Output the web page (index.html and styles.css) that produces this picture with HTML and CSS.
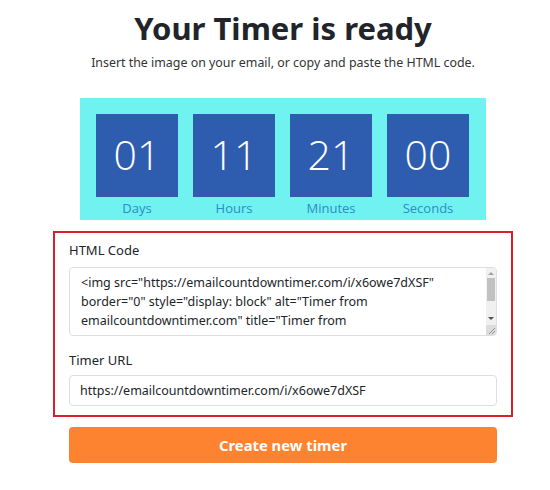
FILE: index.html
```html
<!DOCTYPE html>
<html>
<head>
<meta charset="utf-8">
<link rel="stylesheet" href="styles.css">
</head>
<body>
<main class="page">
  <h1 class="title">Your Timer is ready</h1>
  <p class="subtitle">Insert the image on your email, or copy and paste the HTML code.</p>
  <div class="timer">
    <div class="unit"><div class="digits">01</div><div class="label">Days</div></div>
    <div class="unit"><div class="digits">11</div><div class="label">Hours</div></div>
    <div class="unit"><div class="digits">21</div><div class="label">Minutes</div></div>
    <div class="unit"><div class="digits">00</div><div class="label">Seconds</div></div>
  </div>
  <section class="codebox">
    <label class="field-label">HTML Code</label>
    <div class="code-wrap">
      <textarea class="code" readonly>&lt;img src="https://emailcountdowntimer.com/i/x6owe7dXSF" border="0" style="display: block" alt="Timer from emailcountdowntimer.com" title="Timer from emailcountdowntimer.com" /&gt;
&lt;div style="font-size:10px; font-family: Arial"&gt;Timer by &lt;a href="https://emailcountdowntimer.com"&gt;emailcountdowntimer.com&lt;/a&gt;&lt;/div&gt;</textarea>
      <div class="fake-scroll" aria-hidden="true">
        <span class="arrow-up"></span>
        <span class="thumb"></span>
        <span class="arrow-down"></span>
      </div>
      <div class="fake-resizer" aria-hidden="true">
        <svg width="10" height="10" viewBox="0 0 10 10"><path d="M9 3 L3 9 M9 6 L6 9" stroke="#8a8a8a" stroke-width="0.9" fill="none"/></svg>
      </div>
    </div>
    <label class="field-label url-label">Timer URL</label>
    <input class="url" type="text" readonly value="https://emailcountdowntimer.com/i/x6owe7dXSF">
  </section>
  <button class="create">Create new timer</button>
</main>
</body>
</html>
```
FILE: styles.css
```css
html, body {
  margin: 0;
  padding: 0;
  background: #ffffff;
}
body {
  font-family: "Noto Sans", "Open Sans", sans-serif;
  color: #212529;
}
.page {
  width: 460px;
  margin-left: 53px;
  display: flex;
  flex-direction: column;
  align-items: center;
}
.title {
  margin: 6px 0 0;
  font-size: 31px;
  font-weight: 700;
  line-height: 44px;
  color: #212529;
}
.subtitle {
  margin: 3px 0 0;
  font-size: 12.4px;
  line-height: 20px;
  color: #333;
}
.timer {
  margin-top: 25px;
  width: 406px;
  height: 122px;
  box-sizing: border-box;
  background: #70f2f1;
  padding: 16px 17px 0 16px;
  display: flex;
  gap: 15px;
}
.unit {
  width: 82px;
  display: flex;
  flex-direction: column;
  align-items: center;
}
.digits {
  width: 82px;
  height: 83px;
  background: #2e5daf;
  color: #ffffff;
  font-family: "Open Sans", sans-serif;
  font-weight: 300;
  font-size: 41px;
  line-height: 80px;
  text-align: center;
}
.label {
  margin-top: 2px;
  font-family: "Open Sans", sans-serif;
  font-size: 13px;
  line-height: 18px;
  color: #2d8bc5;
}
.codebox {
  margin-top: 11px;
  width: 460px;
  box-sizing: border-box;
  border: 2px solid #d8202c;
  padding: 7px 14px 9px 14px;
  display: flex;
  flex-direction: column;
}
.field-label {
  font-size: 13px;
  line-height: 20px;
  color: #212529;
}
.code-wrap {
  position: relative;
  margin-top: 7px;
  width: 428px;
  height: 69px;
  box-sizing: border-box;
  border: 1px solid #dcdfe2;
  border-radius: 4px;
  background: #fff;
}
.code {
  display: block;
  width: 426px;
  height: 62px;
  box-sizing: border-box;
  border: none;
  outline: none;
  padding: 5px 22px 0 11px;
  font-family: "Noto Sans", "Open Sans", sans-serif;
  font-size: 12.5px;
  line-height: 19px;
  color: #212529;
  resize: none;
  overflow: hidden;
  background: transparent;
  border-radius: 4px 4px 0 0;
}
.fake-scroll {
  position: absolute;
  top: 0;
  right: 0;
  width: 10px;
  height: 57px;
  background: #f0f0f0;
  border-top-right-radius: 3px;
}
.arrow-up {
  position: absolute;
  top: 4px;
  left: 2px;
  width: 0;
  height: 0;
  border-left: 3px solid transparent;
  border-right: 3px solid transparent;
  border-bottom: 3px solid #a3a3a3;
}
.thumb {
  position: absolute;
  top: 10px;
  left: 1px;
  width: 8px;
  height: 23px;
  background: #c1c1c1;
}
.arrow-down {
  position: absolute;
  bottom: 5px;
  left: 2px;
  width: 0;
  height: 0;
  border-left: 3px solid transparent;
  border-right: 3px solid transparent;
  border-top: 3px solid #505050;
}
.fake-resizer {
  position: absolute;
  right: 0;
  bottom: 0;
  width: 10px;
  height: 10px;
  background: #dcdcdc;
  border-bottom-right-radius: 3px;
}
.fake-resizer svg {
  display: block;
}
.url-label {
  margin-top: 14px;
}
.url {
  margin-top: 5px;
  width: 428px;
  height: 31px;
  box-sizing: border-box;
  border: 1px solid #dcdfe2;
  border-radius: 4px;
  padding: 4px 10px;
  font-family: "Noto Sans", "Open Sans", sans-serif;
  font-size: 12.5px;
  color: #212529;
}
.create {
  margin-top: 10px;
  width: 428px;
  height: 36px;
  border: none;
  border-radius: 4px;
  background: #fd8330;
  color: #ffffff;
  font-family: "Noto Sans", "Open Sans", sans-serif;
  font-weight: 700;
  font-size: 14.8px;
}
```
